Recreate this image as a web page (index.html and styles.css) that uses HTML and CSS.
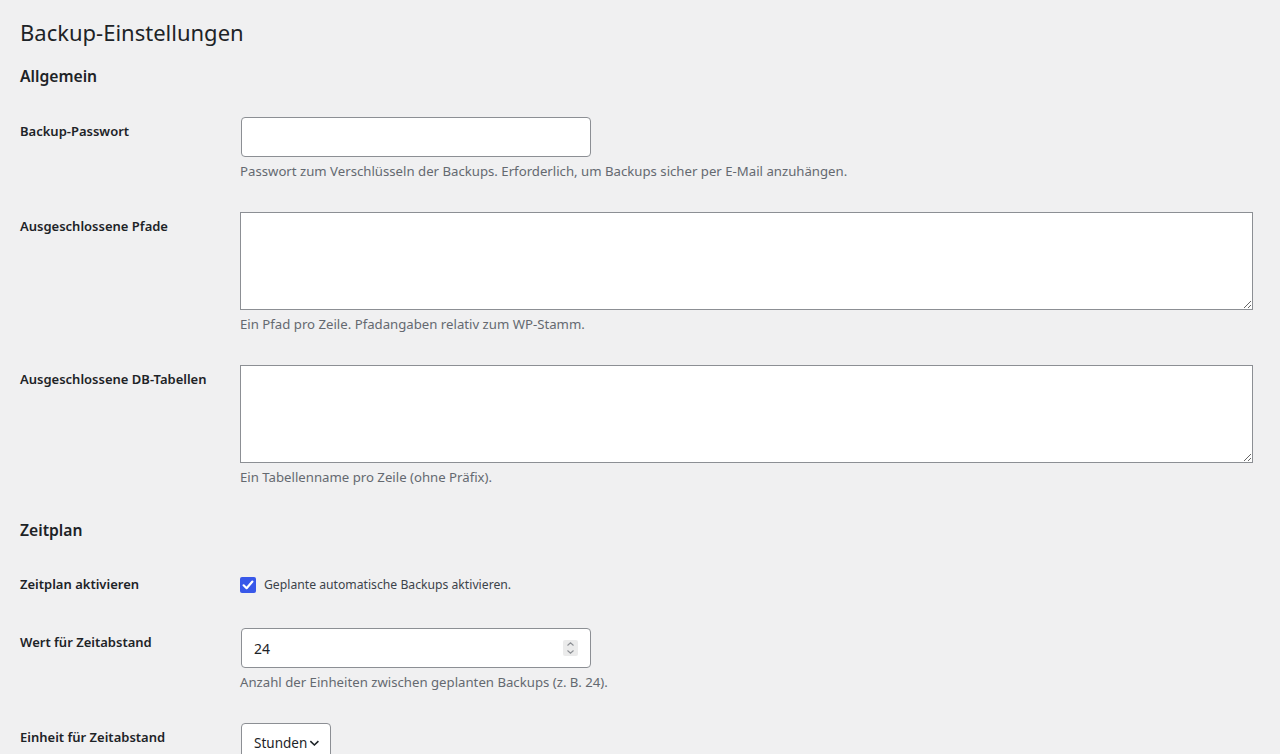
FILE: index.html
```html
<!DOCTYPE html>
<html lang="de">
<head>
<meta charset="utf-8">
<title>Backup-Einstellungen</title>
<link rel="stylesheet" href="styles.css">
</head>
<body>
<div class="wrap">
  <h1 class="page-title">Backup-Einstellungen</h1>

  <h2 class="section-title">Allgemein</h2>
  <div class="form-table">
    <div class="row">
      <div class="th"><label for="pw">Backup-Passwort</label></div>
      <div class="td">
        <input id="pw" class="regular-text" type="password">
        <p class="description">Passwort zum Verschlüsseln der Backups. Erforderlich, um Backups sicher per E-Mail anzuhängen.</p>
      </div>
    </div>
    <div class="row">
      <div class="th"><label for="paths">Ausgeschlossene Pfade</label></div>
      <div class="td">
        <textarea id="paths" class="large-text"></textarea>
        <p class="description">Ein Pfad pro Zeile. Pfadangaben relativ zum WP-Stamm.</p>
      </div>
    </div>
    <div class="row">
      <div class="th"><label for="tables">Ausgeschlossene DB-Tabellen</label></div>
      <div class="td">
        <textarea id="tables" class="large-text"></textarea>
        <p class="description">Ein Tabellenname pro Zeile (ohne Präfix).</p>
      </div>
    </div>
  </div>

  <h2 class="section-title">Zeitplan</h2>
  <div class="form-table">
    <div class="row">
      <div class="th"><span class="label">Zeitplan aktivieren</span></div>
      <div class="td">
        <label class="check">
          <span class="checkbox">
            <svg width="16" height="16" viewBox="0 0 16 16"><path d="M3.6 8.3 L6.6 11.2 L12.4 4.6" fill="none" stroke="#fff" stroke-width="2.2" stroke-linecap="round" stroke-linejoin="round"/></svg>
          </span>
          <span>Geplante automatische Backups aktivieren.</span>
        </label>
      </div>
    </div>
    <div class="row">
      <div class="th"><label for="interval">Wert für Zeitabstand</label></div>
      <div class="td">
        <div class="number-wrap">
          <input id="interval" class="regular-text number" type="text" value="24">
          <span class="spinner">
            <svg width="15" height="16" viewBox="0 0 15 16"><path d="M4.5 5.5 L7.5 2.8 L10.5 5.5" fill="none" stroke="#8c8f94" stroke-width="1.1"/><path d="M4.5 10.5 L7.5 13.2 L10.5 10.5" fill="none" stroke="#8c8f94" stroke-width="1.1"/></svg>
          </span>
        </div>
        <p class="description">Anzahl der Einheiten zwischen geplanten Backups (z. B. 24).</p>
      </div>
    </div>
    <div class="row">
      <div class="th"><span class="label">Einheit für Zeitabstand</span></div>
      <div class="td">
        <div class="select">
          <span>Stunden</span>
          <svg width="12" height="12" viewBox="0 0 12 12"><path d="M1.5 4 L6 8.2 L10.5 4" fill="none" stroke="#1d2327" stroke-width="1.8"/></svg>
        </div>
      </div>
    </div>
  </div>
</div>
</body>
</html>
```

FILE: styles.css
```css
html, body {
  margin: 0;
  padding: 0;
  background: #f0f0f1;
  color: #1d2327;
  font-family: "Noto Sans", "Open Sans", sans-serif;
  font-size: 13px;
}

.wrap {
  padding: 17px 27px 0 20px;
}

.page-title {
  margin: 0;
  font-size: 22px;
  font-weight: 400;
  line-height: 30px;
  color: #1d2327;
}

.section-title {
  margin: 16px 0 14px;
  font-size: 15.7px;
  font-weight: 600;
  line-height: 22px;
  color: #1d2327;
}

.page-title + .section-title {
  margin: 18px 0 15px;
}

.form-table {
  display: flex;
  flex-direction: column;
}

.row {
  display: grid;
  grid-template-columns: 220px 1fr;
}

.th {
  padding: 20px 0;
  font-size: 13px;
  font-weight: 600;
  line-height: 18px;
  color: #1d2327;
}

.td {
  padding: 15px 0;
}

.regular-text {
  box-sizing: border-box;
  width: 350px;
  height: 40px;
  margin: 0 0 0 1px;
  padding: 0 12px;
  border: 1px solid #8c8f94;
  border-radius: 4px;
  background: #fff;
  font-family: inherit;
  font-size: 14px;
  color: #1d2327;
  display: block;
}

.large-text {
  box-sizing: border-box;
  display: block;
  width: 100%;
  height: 98px;
  margin: 0;
  padding: 6px 8px;
  border: 1px solid #8c8f94;
  border-radius: 0;
  background: #fff;
  font-family: inherit;
  font-size: 14px;
  resize: vertical;
}

.description {
  margin: 4px 0 0;
  font-size: 13.2px;
  line-height: 21px;
  color: #646970;
}

.check {
  display: flex;
  align-items: center;
  gap: 8px;
  height: 28px;
  font-size: 12.2px;
  color: #3c434a;
}

.checkbox {
  width: 16px;
  height: 16px;
  border-radius: 2px;
  background: #3858e9;
  display: flex;
  margin-top: 2px;
}

.number-wrap {
  position: relative;
  width: 351px;
}

.spinner {
  position: absolute;
  right: 13px;
  top: 12px;
  width: 15px;
  height: 16px;
  background: #ebebeb;
  border-radius: 2px;
  display: flex;
}

.select {
  box-sizing: border-box;
  margin-left: 1px;
  width: 90px;
  height: 40px;
  padding: 0 10px 0 12px;
  border: 1px solid #8c8f94;
  border-radius: 4px;
  background: #fff;
  display: flex;
  align-items: center;
  gap: 2px;
  font-size: 13.5px;
  color: #1d2327;
}
```
